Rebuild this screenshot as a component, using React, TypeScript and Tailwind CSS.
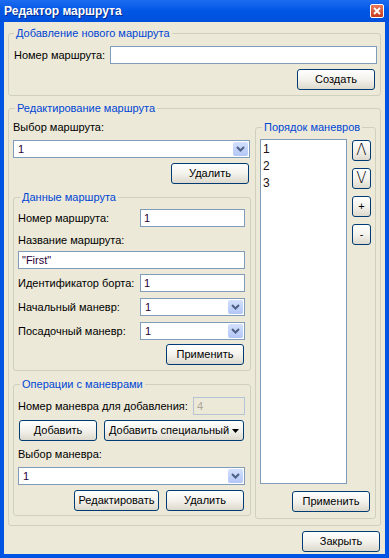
import React from 'react'

type Kids = { children?: React.ReactNode; className?: string }

function Group({ title, legend = '', className = '', children }: Kids & { title: string; legend?: string }) {
  return (
    <fieldset className={`rounded-[3px] border border-[#D0D0BF] ${className}`}>
      <legend className={`px-[2px] text-[11px] leading-[13px] text-[#0046D5] ${legend}`}>{title}</legend>
      {children}
    </fieldset>
  )
}

function Btn({ className = '', children }: Kids) {
  return (
    <div
      className={`flex h-[21px] items-center justify-center rounded-[3px] border border-[#003C74] bg-linear-to-b from-white via-[#F3F2EC] to-[#DDD9CD] text-[11px] leading-[13px] text-black ${className}`}
    >
      {children}
    </div>
  )
}

function Field({ value = '', className = '', disabled = false }: { value?: string; className?: string; disabled?: boolean }) {
  return (
    <div
      className={`h-[18px] border pl-[3px] text-[11px] leading-[16px] ${
        disabled ? 'border-[#B5C4D4] bg-[#ECE9D8] text-[#ACA899]' : 'border-[#7F9DB9] bg-white text-[#2B0036]'
      } ${className}`}
    >
      {value}
    </div>
  )
}

function Combo({ value, className = '' }: { value: string; className?: string }) {
  return (
    <div className={`flex h-[18px] border border-[#7F9DB9] bg-white ${className}`}>
      <span className="flex-1 pl-[4px] text-[11px] leading-[16px] text-[#2B0036]">{value}</span>
      <span className="m-px flex w-[15px] items-center justify-center rounded-[2px] bg-linear-to-b from-[#D4E0FD] to-[#B2C6F5]">
        <svg width="9" height="6" viewBox="0 0 9 6" aria-hidden="true">
          <path d="M1 1 L4.5 4.5 L8 1" stroke="#4D6185" strokeWidth="2" fill="none" />
        </svg>
      </span>
    </div>
  )
}

export default function App() {
  return (
    <div className="flex h-[558px] w-[389px] flex-col bg-[#0054E3] font-['Liberation_Sans',Arial,sans-serif] text-[11px] text-black">
      {/* title bar */}
      <div className="flex h-[22px] items-center justify-between bg-linear-to-b from-[#1C6CF0] via-[#0056E4] to-[#0050DC] pl-[4px] pr-[5px]">
        <span className="text-[12px] font-bold leading-[14px] text-white [text-shadow:1px_1px_0_#0A2C8C]">Редактор маршрута</span>
        <div className="flex h-[14px] w-[14px] items-center justify-center rounded-[2px] border border-white bg-linear-to-b from-[#E97A5C] to-[#C8391A]">
          <svg width="8" height="8" viewBox="0 0 8 8" aria-hidden="true">
            <path d="M1 1 L7 7 M7 1 L1 7" stroke="white" strokeWidth="1.8" />
          </svg>
        </div>
      </div>

      {/* body */}
      <div className="mx-[4px] mb-[4px] flex flex-1 flex-col bg-[#ECE9D8] px-[4px]">
        <Group title="Добавление нового маршрута" className="mt-[5px] pb-[5px] pl-[5px] pr-[3px]">
          <div className="mt-[6px] flex items-center justify-between">
            <span>Номер маршрута:</span>
            <Field className="w-[267px]" />
          </div>
          <div className="mt-[5px] flex justify-end">
            <Btn className="mr-[2px] w-[78px]">Создать</Btn>
          </div>
        </Group>

        <Group title="Редактирование маршрута" legend="ml-[2px]" className="mt-[6px] pb-[6px] pl-[4px] pr-[4px]">
          <div className="flex gap-[4px]">
            <div className="flex w-[238px] flex-col">
              <span className="mt-[6px] leading-[13px]">Выбор маршрута:</span>
              <Combo value="1" className="mt-[6px] w-[237px]" />
              <Btn className="mr-[2px] mt-[5px] w-[78px] self-end">Удалить</Btn>

              <Group title="Данные маршрута" legend="ml-[2px]" className="mt-[7px] pb-[5px] pl-[4px] pr-[5px]">
                <div className="mt-[5px] flex items-center justify-between">
                  <span>Номер маршрута:</span>
                  <Field value="1" className="w-[105px]" />
                </div>
                <div className="mt-[7px] leading-[13px]">Название маршрута:</div>
                <Field value={'"First"'} className="mt-[4px]" />
                <div className="mt-[5px] flex items-center justify-between">
                  <span>Идентификатор борта:</span>
                  <Field value="1" className="w-[105px]" />
                </div>
                <div className="mt-[6px] flex items-center justify-between">
                  <span>Начальный маневр:</span>
                  <Combo value="1" className="w-[105px]" />
                </div>
                <div className="mt-[6px] flex items-center justify-between">
                  <span>Посадочный маневр:</span>
                  <Combo value="1" className="w-[105px]" />
                </div>
                <div className="mt-[4px] flex justify-end">
                  <Btn className="mr-px w-[78px]">Применить</Btn>
                </div>
              </Group>

              <Group title="Операции с маневрами" legend="ml-[2px]" className="mt-[7px] pb-[4px] pl-[4px] pr-[5px]">
                <div className="mt-[6px] flex items-center justify-between">
                  <span>Номер маневра для добавления:</span>
                  <Field value="4" disabled className="w-[52px]" />
                </div>
                <div className="mt-[5px] flex items-center justify-between">
                  <Btn className="ml-px w-[78px]">Добавить</Btn>
                  <Btn className="mr-px w-[140px] gap-[3px]">
                    Добавить специальный
                    <svg width="7" height="4" viewBox="0 0 7 4" aria-hidden="true">
                      <path d="M0 0 H7 L3.5 4 Z" fill="black" />
                    </svg>
                  </Btn>
                </div>
                <div className="mt-[7px] leading-[13px]">Выбор маневра:</div>
                <Combo value="1" className="mt-[6px]" />
                <div className="mt-[5px] flex justify-end gap-[7px]">
                  <Btn className="w-[85px]">Редактировать</Btn>
                  <Btn className="mr-px w-[78px]">Удалить</Btn>
                </div>
              </Group>
            </div>

            <Group title="Порядок маневров" legend="ml-[2px]" className="mt-[6px] flex h-[398px] w-[121px] flex-col self-start pl-[4px] pr-[4px]">
              <div className="mt-[5px] flex gap-[5px]">
                <div className="h-[345px] w-[87px] border border-[#7F9DB9] bg-white pl-[2px] pt-[1px] text-[12px] leading-[17px] text-[#201010]">
                  <div>1</div>
                  <div>2</div>
                  <div>3</div>
                </div>
                <div className="flex flex-col gap-[7px] pt-px">
                  <Btn className="h-[17px] w-[19px] font-['DejaVu_Sans',sans-serif] text-[15px] font-extralight leading-[15px] text-[#4A3A2A]">Λ</Btn>
                  <Btn className="h-[17px] w-[19px] font-['DejaVu_Sans',sans-serif] text-[15px] font-extralight leading-[15px] text-[#4A3A2A]">V</Btn>
                  <Btn className="h-[17px] w-[19px] text-[9px] text-[#8A4A10]">+</Btn>
                  <Btn className="h-[17px] w-[19px] text-[9px] text-[#8A4A10]">-</Btn>
                </div>
              </div>
              <div className="mt-[7px] flex justify-end">
                <Btn className="mr-px w-[78px]">Применить</Btn>
              </div>
            </Group>
          </div>
        </Group>

        <div className="mt-[5px] flex justify-end">
          <Btn className="mr-px w-[78px]">Закрыть</Btn>
        </div>
      </div>
    </div>
  )
}
